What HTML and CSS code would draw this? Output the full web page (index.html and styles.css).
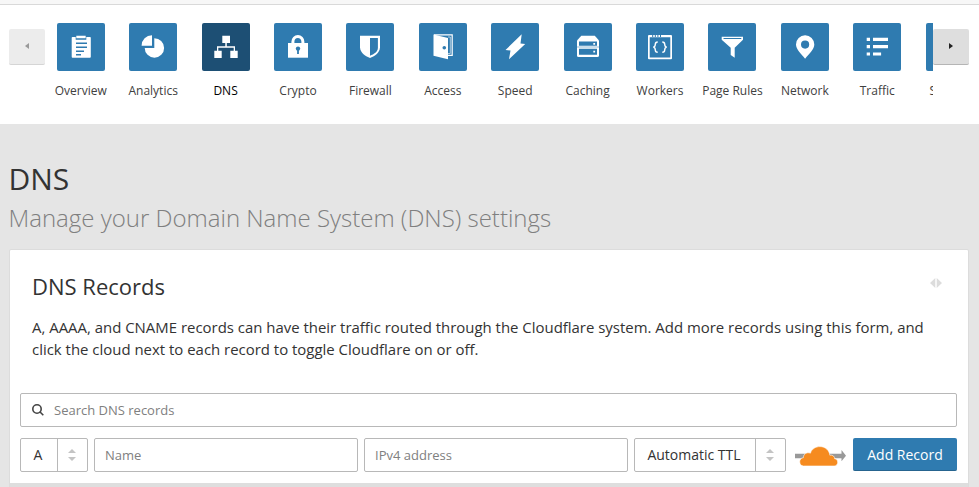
FILE: index.html
```html
<!DOCTYPE html>
<html lang="en">
<head>
<meta charset="utf-8">
<title>DNS</title>
<link rel="stylesheet" href="styles.css">
</head>
<body>
<header class="topbar">
  <button class="scroll scroll-prev" aria-label="Previous"><svg width="4" height="6" viewBox="0 0 4 6"><path d="M4 0v6L0 3z"/></svg></button>
  <nav class="apps">
    <a class="app"><span class="tile"><svg viewBox="0 0 48 48"><path d="M15 14h3.700v2.700h10.600V14h3.700q.8 0 .8.800v19q0 .9-.8.900H15.500q-.8 0-.8-.9V14.800q0-.8.800-.8zM19.300 12.700h9.400v2.600h-9.400z"/><path class="cut" d="M19 19.300h11v1.700H19zM19 23.300h11V25H19zM19 27.300h8V29h-8zM19 31h5v1.500h-5z" transform="translate(0 .1)"/></svg></span><span class="label">Overview</span></a>
    <a class="app"><span class="tile"><svg viewBox="0 0 48 48"><path d="M25.300 15.300A9.700 9.700 0 1 1 15.700 25h9.600zM23 12.200v10.600H12.600A10.500 10.500 0 0 1 23 12.200z"/></svg></span><span class="label">Analytics</span></a>
    <a class="app active"><span class="tile"><svg viewBox="0 0 48 48"><path d="M20.300 12.700H28V20h-3.200v3.300h8.200v4.400h2.700V35h-7.400v-7.300h3.400v-3H16.300v3h3.400V35h-7.400v-7.300H15v-4.400h8.300V20h-3z"/></svg></span><span class="label">DNS</span></a>
    <a class="app"><span class="tile"><svg viewBox="0 0 48 48"><path class="line" stroke-width="3" d="M18.900 21v-2.300a5 5.300 0 0 1 10 0V21"/><path d="M14 20h20v14.700H14z"/><circle class="cut" cx="24" cy="25.600" r="2.200"/><path class="cut" d="M23.100 26h1.800v5h-1.800z"/></svg></span><span class="label">Crypto</span></a>
    <a class="app"><span class="tile"><svg viewBox="0 0 48 48"><path d="M14 12.700h20v11.600C34 30 28 33.500 24 35c-4-1.500-10-5-10-10.700z"/><path class="cut" d="M24 15h7.900v10c0 3.700-4 6.300-7.900 7.700z"/></svg></span><span class="label">Firewall</span></a>
    <a class="app"><span class="tile"><svg viewBox="0 0 48 48"><path class="line" stroke-width="1.200" d="M15 11.900h18.200v20.500H29"/><path class="line thin" d="M29 14h2.300v16.500H29"/><path d="M14.500 11.500L29 15v21.200l-14.500-3.400z"/><circle class="cut" cx="25.300" cy="24.800" r="1.800"/></svg></span><span class="label">Access</span></a>
    <a class="app"><span class="tile"><svg viewBox="0 0 48 48"><path d="M30.700 11.300l-1.200 9.200 4.700.4L18 36.300l1.500-8.800-5-.5z"/></svg></span><span class="label">Speed</span></a>
    <a class="app"><span class="tile"><svg viewBox="0 0 48 48"><path d="M17.300 12.700h13.500l4.200 4.800v15q0 1.600-1.600 1.600H14.600q-1.600 0-1.600-1.600v-15z"/><path class="cut" d="M15 18.500h18v4.200H15zM15 25.800h18v5.900H15zM13 23.700h22v.5H13z"/><path d="M29.300 20h1.800v1.800h-1.800zM29.300 27.700h1.800v1.800h-1.800z"/></svg></span><span class="label">Caching</span></a>
    <a class="app"><span class="tile"><svg viewBox="0 0 48 48"><path d="M12 13q0-1 1-1h22q1 0 1 1v22.300q0 1-1 1H13q-1 0-1-1z"/><path class="cut" d="M13.700 14.300h20.600v20.300H13.700zM16.200 12h1v2h-1zM18.800 12h1v2h-1zM21.400 12h1v2h-1zM24 12h1v2h-1z"/><path class="line" stroke-width="1.400" d="M21.700 19c-2 0-2.400.5-2.400 2.300 0 1.800-.3 2.500-2 2.800 1.700.3 2 1 2 2.800 0 1.800.4 2.300 2.400 2.300M26.300 19c2 0 2.400.5 2.400 2.300 0 1.800.3 2.500 2 2.800-1.700.3-2 1-2 2.800 0 1.800-.4 2.300-2.400 2.300"/></svg></span><span class="label">Workers</span></a>
    <a class="app"><span class="tile"><svg viewBox="0 0 48 48"><path d="M13.700 13.700H35v3l-8.300 8v10l-4-2.700v-7.300l-9-8z"/><path class="cut" d="M15.500 15h17.800v1H15.500z"/></svg></span><span class="label">Page Rules</span></a>
    <a class="app"><span class="tile"><svg viewBox="0 0 48 48"><path fill-rule="evenodd" d="M24.100 12.300a9.200 9.200 0 0 1 9.200 9.200c0 5-5 9-9.200 14.200C20 30.500 15 26.500 15 21.500a9.200 9.200 0 0 1 9.100-9.200zm0 5.200a4.100 4.100 0 1 0 0 8.200 4.100 4.100 0 0 0 0-8.200z"/></svg></span><span class="label">Network</span></a>
    <a class="app"><span class="tile"><svg viewBox="0 0 48 48"><path d="M13.700 14.800H17V18h-3.300zM20 14.800h15V18H20zM13.700 22.100H17v3.200h-3.300zM20 22.100h15v3.200H20zM13.700 29.400H17v3.200h-3.300zM20 29.400h8.100v3.200H20z"/></svg></span><span class="label">Traffic</span></a>
    <a class="app"><span class="tile"></span><span class="label">Stream</span></a>
  </nav>
  <button class="scroll scroll-next" aria-label="Next"><svg width="4" height="6" viewBox="0 0 4 6"><path d="M0 0v6l4-3z"/></svg></button>
</header>
<main>
  <h1>DNS</h1>
  <p class="subtitle">Manage your Domain Name System (DNS) settings</p>
  <section class="card">
    <div class="intro">
      <div class="card-head">
        <h2>DNS Records</h2>
        <svg class="toggle" width="12" height="10" viewBox="0 0 12 10"><path d="M5.300 0v10L0 5zM6.700 0v10L12 5z"/></svg>
      </div>
      <p>A, AAAA, and CNAME records can have their traffic routed through the Cloudflare system. Add more records using this form, and click the cloud next to each record to toggle Cloudflare on or off.</p>
    </div>
    <div class="field search">
      <svg width="12" height="12" viewBox="0 0 12 12"><circle cx="5" cy="5" r="4.200"/><path d="M7.800 7.800l3.500 3.500"/></svg>
      <span>Search DNS records</span>
    </div>
    <div class="form">
      <div class="select type"><span>A</span><i><svg width="8" height="12" viewBox="0 0 8 12"><path d="M0 4l4-4 4 4zM0 8l4 4 4-4z"/></svg></i></div>
      <div class="field grow">Name</div>
      <div class="field grow">IPv4 address</div>
      <div class="select ttl"><span>Automatic TTL</span><i><svg width="8" height="12" viewBox="0 0 8 12"><path d="M0 4l4-4 4 4zM0 8l4 4 4-4z"/></svg></i></div>
      <svg class="cloud" width="52" height="20" viewBox="0 0 52 20"><path fill="#999" d="M0 7.700h46.500V4L51 9.700l-4.500 5.600v-3.100H0z"/><path fill="#f68b1f" stroke="#fff" stroke-width=".6" d="M8.500 20C6 20 4.700 18 4.700 15.800c0-2.300 1.500-4 3.700-4.100-.2-3.500 3.600-6.100 7-4.500C16.700 3 20.500.6 25 .6c5.300 0 9.300 3.600 9.800 8.600 3-.6 5 1.500 4.900 3.600 1.800.2 3 1.500 3 3.400 0 2.200-1.500 3.800-3.500 3.800z"/></svg>
      <button class="add">Add Record</button>
    </div>
    <div class="table-head"></div>
  </section>
</main>
</body>
</html>
```
FILE: styles.css
```css
* { box-sizing: border-box; }
body {
  margin: 0;
  height: 487px;
  overflow: hidden;
  background: #e5e5e5;
  color: #333;
  font: 15px/22px "Open Sans", sans-serif;
}
h1, h2, p { margin: 0; font-weight: 400; }
button { border: 0; padding: 0; font: inherit; }
svg { display: block; flex: none; }

.topbar {
  display: flex;
  height: 120px;
  margin-top: 4px;
  padding: 18px 10px 0 9px;
  border-top: 1px solid #d9d9d9;
  background: #fff;
  box-shadow: 0 -4px #f7f7f7;
}
.scroll {
  display: flex;
  flex: none;
  align-items: center;
  justify-content: center;
  width: 36px;
  height: 36px;
  margin-top: 6px;
  padding-bottom: 2px;
  border-radius: 2px;
}
.scroll-prev { padding-right: 1px; background: #ececec; border-bottom: 1px solid #d5d5d5; fill: #999; }
.scroll-next { padding-right: 1px; background: #dedede; border-bottom: 1px solid #b5b5b5; fill: #222; }
.apps { display: flex; flex: 1; min-width: 0; overflow: hidden; }
.app:first-child { margin-left: -0.45px; }
.app {
  display: flex;
  flex: 0 0 72.41px;
  flex-direction: column;
  align-items: center;
  font-size: 12px;
  line-height: 18px;
  color: #404040;
  white-space: nowrap;
}
.tile {
  --tile: #2f7bb0;
  width: 48px;
  height: 48px;
  border-radius: 2px;
  background: var(--tile);
  fill: #fff;
}
.active { color: #000; }
.active .tile { --tile: #1d4f74; }
.cut { fill: var(--tile); }
.line { fill: none; stroke: #fff; }
.thin { stroke-width: .6; }
.label { margin-top: 11px; }

main { padding: 33px 10px 0 9px; }
h1 { margin-left: -0.5px; font-size: 30px; line-height: 44px; }
.subtitle {
  margin: 1px 0 0 -0.5px;
  font-size: 24px;
  line-height: 32px;
  font-weight: 300;
  color: #7f7f7f;
}
.card {
  margin-top: 15px;
  border: 1px solid #dcdcdc;
  border-radius: 2px;
  background: #fff;
}
.intro { padding: 21px 22px 0; }
.card-head { display: flex; justify-content: space-between; }
h2 { font-size: 22px; line-height: 30px; }
.toggle { margin: 7px 4px 0 0; fill: #dcdcdc; }
.intro p { margin-top: 15px; font-size: 14.95px; }
.field, .select {
  display: flex;
  align-items: center;
  height: 34px;
  border: 1px solid #b8b8b8;
  border-radius: 2px;
  background: #fff;
}
.field { padding: 0 10px; font-size: 13px; color: #808080; }
.search { gap: 10px; margin: 33px 11px 11px 10px; padding-left: 11px; }
.search svg { fill: none; stroke: #444; stroke-width: 1.6; }
.form { display: flex; align-items: flex-start; margin: 0 11px 11px 10px; }
.grow { flex: 1; margin-left: 6px; }
.select { font-size: 14px; }
.select span { flex: 1; padding-right: 2px; text-align: center; }
.select i {
  display: flex;
  align-items: center;
  justify-content: center;
  width: 30px;
  height: 100%;
  padding-right: 1px;
  border-left: 1px solid #b8b8b8;
  fill: #c4c4c4;
}
.type { width: 68px; }
.ttl { width: 152px; margin-left: 6px; }
.cloud { margin: 8px 6px 0 9px; }
.add {
  width: 104px;
  height: 33px;
  padding-top: 1px;
  border-bottom: 1px solid #26648f;
  border-radius: 2px;
  background: #2f7bb0;
  color: #fff;
  font-size: 14px;
}
.table-head { height: 20px; background: #dedede; }
```
